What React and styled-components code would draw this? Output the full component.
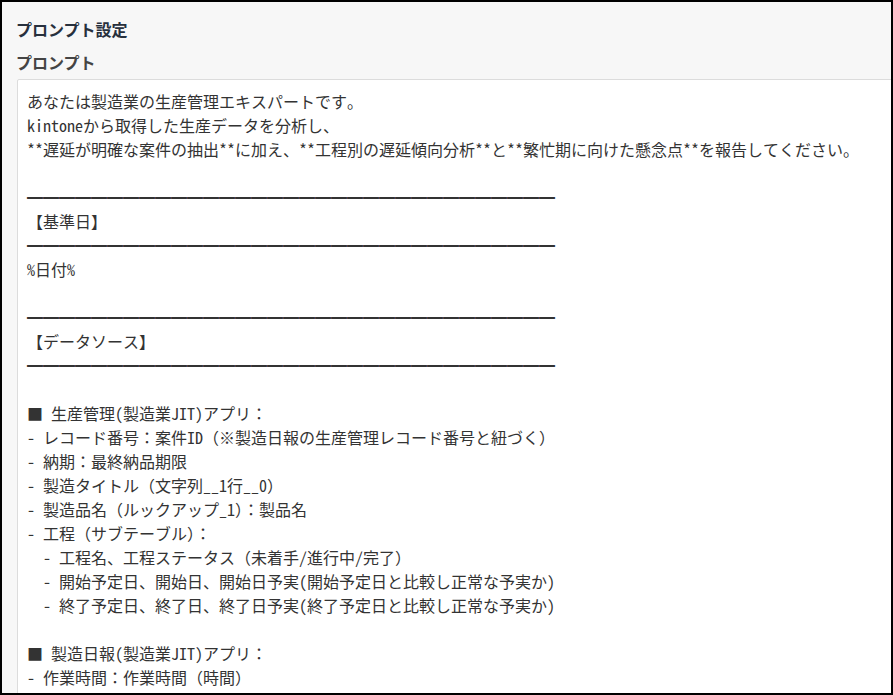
import { createGlobalStyle, styled } from 'styled-components';

const GlobalStyle = createGlobalStyle`
  html, body {
    margin: 0;
    padding: 0;
    background: #fff;
  }
`;

const Frame = styled.div`
  box-sizing: border-box;
  width: 893px;
  height: 695px;
  border: 2px solid #000;
  background: #f7f7f7;
  overflow: hidden;
  padding: 15px 0 0 14px;
  font-family: "Noto Sans CJK JP", "Noto Sans", sans-serif;
`;

const Title = styled.h2`
  margin: 0;
  font-size: 16px;
  line-height: 24px;
  font-weight: 700;
  color: #27303d;
`;

const Label = styled.h3`
  margin: 9px 0 0 0;
  font-size: 16px;
  line-height: 24px;
  font-weight: 700;
  color: #444;
`;

const Prompt = styled.textarea`
  display: block;
  box-sizing: border-box;
  width: calc(100% + 4px);
  height: 800px;
  margin: 5px 0 0 1px;
  padding: 9px 9px;
  border: 1px solid #dcdcdc;
  border-radius: 2px;
  background: #fff;
  color: #333;
  font-family: "Noto Sans Mono CJK JP", "Noto Sans CJK JP", monospace;
  font-size: 16px;
  line-height: 24px;
  resize: none;
  overflow: hidden;
  outline: none;
`;

const rule = '━'.repeat(33);

const promptText = [
  'あなたは製造業の生産管理エキスパートです。',
  'kintoneから取得した生産データを分析し、',
  '**遅延が明確な案件の抽出**に加え、**工程別の遅延傾向分析**と**繁忙期に向けた懸念点**を報告してください。',
  '',
  rule,
  '【基準日】',
  rule,
  '%日付%',
  '',
  rule,
  '【データソース】',
  rule,
  '',
  '■ 生産管理(製造業JIT)アプリ：',
  '- レコード番号：案件ID（※製造日報の生産管理レコード番号と紐づく）',
  '- 納期：最終納品期限',
  '- 製造タイトル（文字列__1行__0）',
  '- 製造品名（ルックアップ_1）：製品名',
  '- 工程（サブテーブル）：',
  '  - 工程名、工程ステータス（未着手/進行中/完了）',
  '  - 開始予定日、開始日、開始日予実(開始予定日と比較し正常な予実か)',
  '  - 終了予定日、終了日、終了日予実(終了予定日と比較し正常な予実か)',
  '',
  '■ 製造日報(製造業JIT)アプリ：',
  '- 作業時間：作業時間（時間）',
  '- 作業日：作業日付（日付）、作業者：担当者名（ユーザー選択）',
].join('\n');

const App = () => {
  return (
    <>
      <GlobalStyle />
      <Frame>
        <Title>プロンプト設定</Title>
        <Label>プロンプト</Label>
        <Prompt readOnly value={promptText} spellCheck={false} />
      </Frame>
    </>
  );
};

export default App;
